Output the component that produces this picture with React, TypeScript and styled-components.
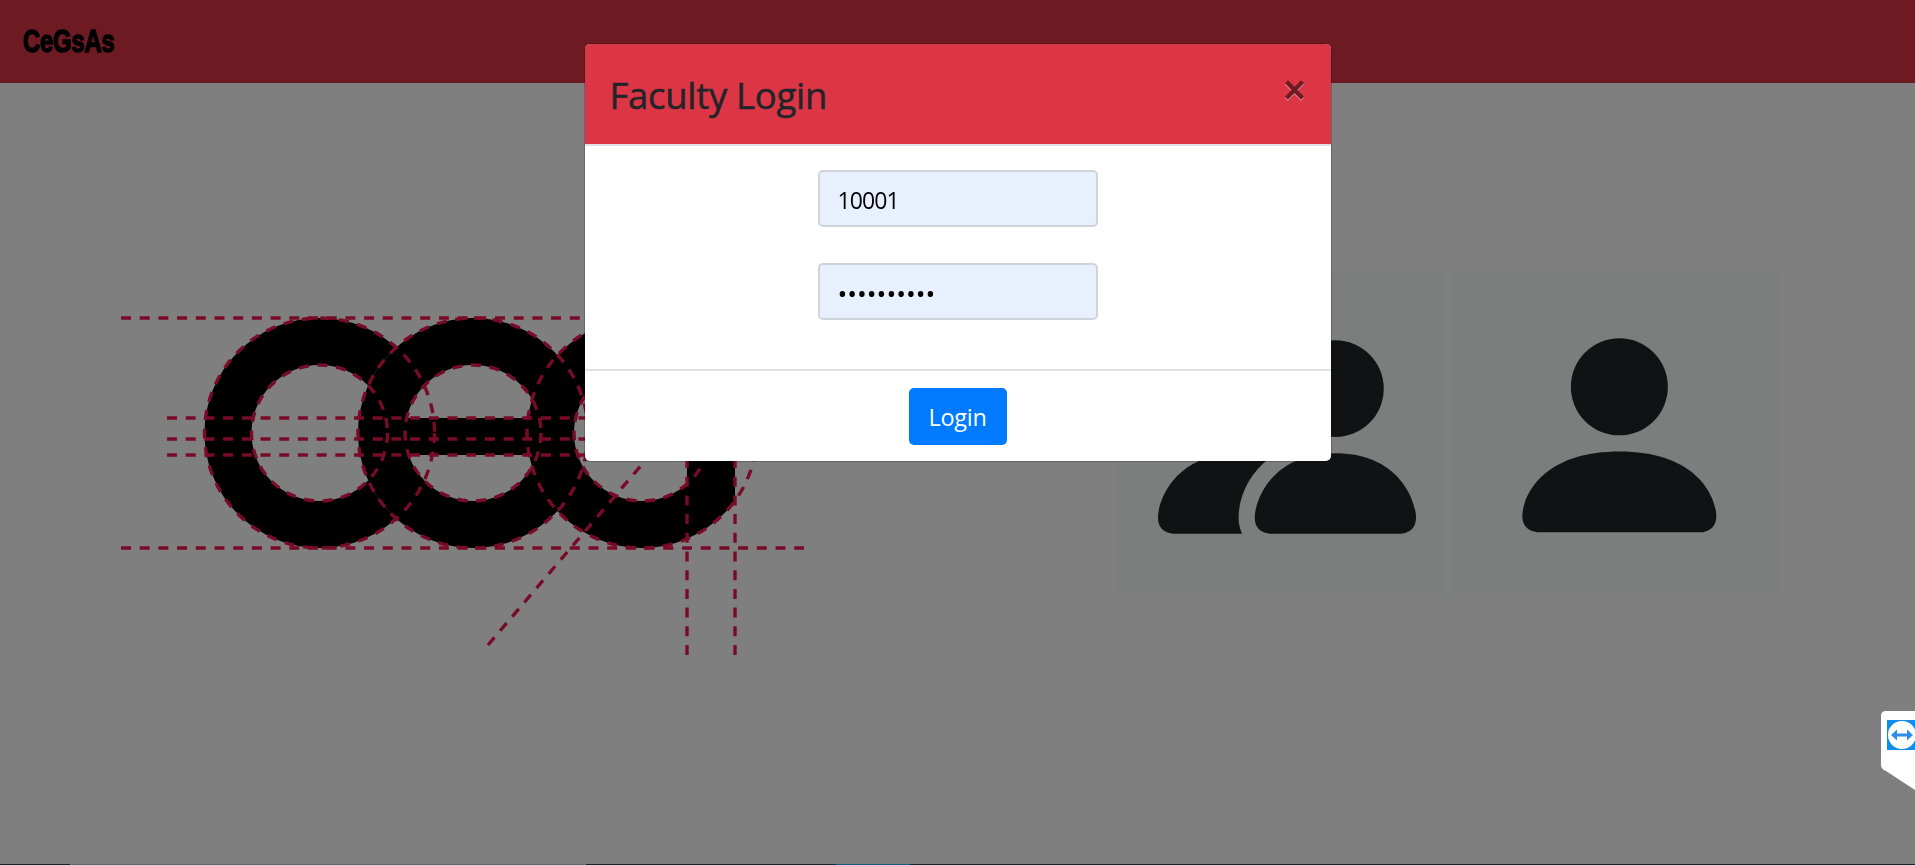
import React from "react";
import styled, { createGlobalStyle } from "styled-components";

const Global = createGlobalStyle`
  html, body { margin: 0; padding: 0; height: 100%; background: #fff; overflow: hidden; }
  body { font-family: "Open Sans", "Liberation Sans", sans-serif; color: #212529; }
`;

const Page = styled.div`
  width: 1915px;
  height: 865px;
  overflow: hidden;
`;

const NavBar = styled.header`
  height: 83px;
  background: #dc3545;
  display: flex;
  align-items: center;
  padding: 0 0 0 23px;
  box-sizing: border-box;
`;

const Brand = styled.span`
  font-family: "Liberation Sans Narrow", "Liberation Sans", sans-serif;
  font-weight: 700;
  font-size: 32px;
  letter-spacing: -0.4px;
  color: #000;
  -webkit-text-stroke: 1.5px #000;
  transform: scaleX(0.75);
  transform-origin: left center;
`;

const Main = styled.main`
  display: flex;
  align-items: flex-start;
  padding: 188px 0 0 100px;
`;

const LogoGraphic = styled.svg`
  display: block;
  flex: none;
  margin: 29px 218px 0 0;
`;

const Cards = styled.div`
  display: flex;
  gap: 8px;
`;

const IconCard = styled.div<{ $padLeft: number; $padTop: number }>`
  width: 328px;
  height: 327px;
  box-sizing: border-box;
  background: #f8fcfa;
  padding: ${(p) => p.$padTop}px 0 0 ${(p) => p.$padLeft}px;
  color: #212529;
`;

const Overlay = styled.div`
  position: fixed;
  inset: 0;
  background: rgba(0, 0, 0, 0.5);
  display: flex;
  justify-content: center;
  align-items: flex-start;
  padding-top: 43px;
  box-sizing: border-box;
`;

const Modal = styled.div`
  width: 748px;
  height: 419px;
  box-sizing: border-box;
  background: #fff;
  border: 1px solid rgba(0, 0, 0, 0.2);
  border-radius: 6px;
  background-clip: padding-box;
  display: flex;
  flex-direction: column;
`;

const ModalHeader = styled.div`
  height: 102px;
  box-sizing: border-box;
  background: #dc3545;
  border-bottom: 2px solid #dee2e6;
  border-radius: 5px 5px 0 0;
  display: flex;
  justify-content: space-between;
  align-items: flex-start;
  padding: 28px 25px 0 25px;
`;

const Title = styled.h5`
  margin: 0;
  font-family: "Open Sans", sans-serif;
  font-weight: 500;
  font-size: 36.5px;
  line-height: 1.3;
  letter-spacing: -0.3px;
  color: #212529;
  -webkit-text-stroke: 0.5px #212529;
`;

const CloseButton = styled.button`
  border: 0;
  padding: 0;
  background: transparent;
  font-family: "Liberation Sans", sans-serif;
  font-size: 38px;
  font-weight: 700;
  line-height: 1;
  color: #000;
  opacity: 0.5;
  text-shadow: 0 1px 0 #fff;
  margin-top: -1px;
`;

const ModalBody = styled.form`
  height: 223px;
  box-sizing: border-box;
  padding-top: 24px;
  display: flex;
  flex-direction: column;
  align-items: center;
  gap: 36px;
`;

const Field = styled.input`
  width: 280px;
  height: 57px;
  box-sizing: border-box;
  background: #e8f0fe;
  border: 2px solid #ced4da;
  border-radius: 5px;
  padding: 3px 18px 0;
  font-family: "Open Sans", sans-serif;
  font-size: 23px;
  letter-spacing: -0.9px;
  color: #000;
  outline: none;

  &[type="password"] {
    font-size: 26px;
    letter-spacing: 0;
  }
`;

const ModalFooter = styled.div`
  border-top: 2px solid #dee2e6;
  flex: 1;
  display: flex;
  justify-content: center;
  align-items: flex-start;
  padding-top: 17px;
`;

const LoginButton = styled.button`
  width: 98px;
  height: 57px;
  border: 0;
  border-radius: 5px;
  background: #007bff;
  color: #fff;
  font-family: "Open Sans", sans-serif;
  font-size: 23.5px;
  letter-spacing: -0.3px;
  padding: 0;
`;

const TeamViewer = styled.svg`
  position: fixed;
  right: 0;
  top: 711px;
  display: block;
`;

const Taskbar = styled.div`
  position: fixed;
  left: 0;
  right: 0;
  bottom: 0;
  height: 1px;
  display: flex;
  background: #122530;
`;

const TaskSegment = styled.span<{ $w: number; $c: string }>`
  flex: 0 0 ${(p) => p.$w}px;
  background: ${(p) => p.$c};
`;

const DASH = "10 8.7";
const LINE = "#f0174f";

function Logo() {
  // viewBox is in page coordinates of the reference
  return (
    <LogoGraphic width={800} height={400} viewBox="100 300 800 400" aria-label="CEG logo">
      <defs>
        <mask id="ring1">
          <rect x="100" y="300" width="800" height="400" fill="#fff" />
          <circle cx="319.5" cy="433" r="68" fill="#000" />
          <circle cx="473" cy="433" r="115" fill="#000" />
        </mask>
        <clipPath id="gOuter">
          <rect x="500" y="300" width="235" height="300" />
        </clipPath>
        <clipPath id="gHole">
          <rect x="500" y="300" width="187" height="300" />
        </clipPath>
      </defs>
      <circle cx="319.5" cy="433" r="115" fill="#000" mask="url(#ring1)" />
      <circle cx="473" cy="433" r="115" fill="#000" />
      <circle cx="473" cy="433" r="68" fill="#fff" />
      <rect x="400" y="418" width="145" height="37" fill="#000" />
      <circle cx="642" cy="433" r="115" fill="#000" clipPath="url(#gOuter)" />
      <circle cx="642" cy="433" r="68" fill="#fff" clipPath="url(#gHole)" />
      <g fill="none" stroke={LINE} strokeWidth="3.4" strokeDasharray={DASH}>
        <circle cx="319.5" cy="433" r="115" />
        <circle cx="319.5" cy="433" r="68" />
        <circle cx="473" cy="433" r="115" />
        <circle cx="473" cy="433" r="68" />
        <circle cx="642" cy="433" r="115" />
        <circle cx="642" cy="433" r="68" />
        <path d="M121 318H800" />
        <path d="M121 548H804" />
        <path d="M167 418H800" />
        <path d="M167 439H800" />
        <path d="M167 455H800" />
        <path d="M687 655V300" />
        <path d="M735 655V300" />
        <path d="M488 645L760 326" />
      </g>
    </LogoGraphic>
  );
}

function PeopleIcon() {
  return (
    <svg width="258" height="258" viewBox="0 0 16 16" fill="currentColor" display="block">
      <path d="M7 14s-1 0-1-1 1-4 5-4 5 3 5 4-1 1-1 1H7zm4-6a3 3 0 1 0 0-6 3 3 0 0 0 0 6z" />
      <path fillRule="evenodd" d="M5.216 14A2.238 2.238 0 0 1 5 13c0-1.355.68-2.75 1.936-3.72A6.325 6.325 0 0 0 5 9c-4 0-5 3-5 4s1 1 1 1h4.216z" />
      <path d="M4.5 8a2.5 2.5 0 1 0 0-5 2.5 2.5 0 0 0 0 5z" />
    </svg>
  );
}

function PersonIcon() {
  return (
    <svg width="258.7" height="258.7" viewBox="0 0 16 16" fill="currentColor" display="block">
      <path d="M3 14s-1 0-1-1 1-4 6-4 6 3 6 4-1 1-1 1H3zm5-6a3 3 0 1 0 0-6 3 3 0 0 0 0 6z" />
    </svg>
  );
}

export default function App() {
  return (
    <Page>
      <Global />
      <NavBar>
        <Brand>CeGsAs</Brand>
      </NavBar>
      <Main>
        <Logo />
        <Cards>
          <IconCard $padLeft={40} $padTop={37}>
            <PeopleIcon />
          </IconCard>
          <IconCard $padLeft={36} $padTop={35}>
            <PersonIcon />
          </IconCard>
        </Cards>
      </Main>
      <Overlay>
        <Modal>
          <ModalHeader>
            <Title>Faculty Login</Title>
            <CloseButton type="button">×</CloseButton>
          </ModalHeader>
          <ModalBody>
            <Field type="text" defaultValue="10001" />
            <Field type="password" defaultValue="1000110001" />
          </ModalBody>
          <ModalFooter>
            <LoginButton type="button">Login</LoginButton>
          </ModalFooter>
        </Modal>
      </Overlay>
      <TeamViewer width="34" height="80" viewBox="0 0 34 80">
        <path d="M5 0H34V79L5 60Q0 58 0 54V5Q0 0 5 0Z" fill="#fff" />
        <rect x="6" y="9" width="28" height="30" fill="#0e8ee9" />
        <circle cx="21" cy="24" r="14" fill="#fff" />
        <path d="M10 24L16 18.5V22.5H26V18.5L32 24L26 29.5V25.5H16V29.5Z" fill="#2f8fe6" />
      </TeamViewer>
      <Taskbar>
        <TaskSegment $w={70} $c="#122530" />
        <TaskSegment $w={516} $c="#5a6c78" />
        <TaskSegment $w={250} $c="#122530" />
        <TaskSegment $w={74} $c="#1a5a80" />
      </Taskbar>
    </Page>
  );
}
